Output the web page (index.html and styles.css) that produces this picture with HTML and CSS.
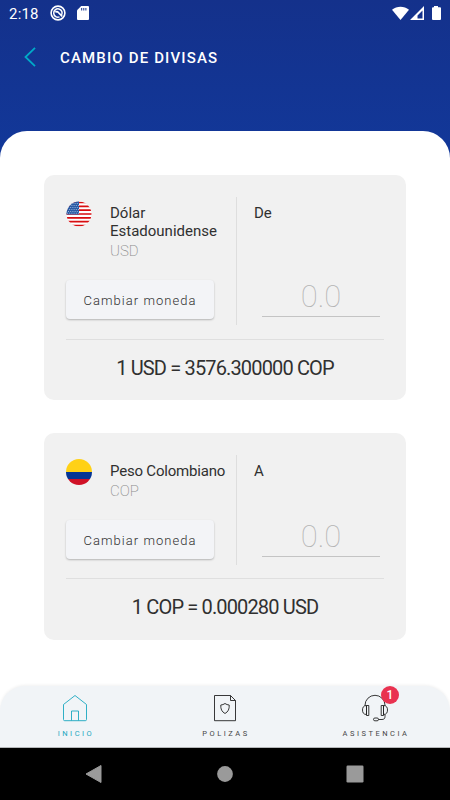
FILE: index.html
```html
<!DOCTYPE html>
<html lang="es">
    <head>
        <meta charset="UTF-8" />
        <meta name="viewport" content="width=device-width, initial-scale=1.0" />
        <title>Cambio de divisas</title>
        <link rel="stylesheet" href="styles.css">
    </head>
    <body>
        <header>
            <div class="status-bar">
                <span class="time">2:18</span>
                <svg class="icon-app" width="16" height="16" viewBox="0 0 16 16">
                    <circle cx="8" cy="8" r="6.9" fill="none" stroke="#fff" stroke-width="1.6" />
                    <path d="M11.5 10.2A4.2 4.2 0 1 0 9.5 11.9" fill="none" stroke="#fff" stroke-width="1.5" />
                    <path d="M5.4 7.2c1-.8 2.2-.6 3 .3l3.8 4" fill="none" stroke="#fff" stroke-width="1.8" />
                </svg>
                <svg class="icon-sd" width="12" height="14" viewBox="0 0 12 14">
                    <path d="M4.2 0H11a1 1 0 0 1 1 1v12a1 1 0 0 1-1 1H1a1 1 0 0 1-1-1V4.2z" fill="#fff" />
                    <path d="M4.7 2v2.5M6.8 2v2.5M8.9 2v2.5" stroke="#14328c" stroke-width="1" />
                </svg>
                <svg class="icon-signal" width="50" height="16" viewBox="0 0 50 16">
                    <path d="M0 3.8C4.8-.3 12.2-.3 17 3.8L8.5 14z" fill="#fff" />
                    <path d="M18 14L32 0v14zM25.5 12.5h5V4.5l-5 5z" fill="#fff" fill-rule="evenodd" />
                    <path d="M42 0h4v1.2h2a1 1 0 0 1 1 1V13a1 1 0 0 1-1 1h-7a1 1 0 0 1-1-1V2.2a1 1 0 0 1 1-1h1z" fill="#fff" />
                </svg>
            </div>
            <div class="title-bar">
                <svg width="12" height="20" viewBox="0 0 12 20">
                    <path d="M11 .8L1.5 10l9.5 9.2" fill="none" stroke="#00aac8" stroke-width="1.8" />
                </svg>
                <h1>CAMBIO DE DIVISAS</h1>
            </div>
        </header>
        <main>
            <section class="card">
                <div class="card-main">
                    <div class="currency">
                        <div class="currency-info">
                            <svg class="flag" width="26" height="26" viewBox="0 0 26 26">
                                <clipPath id="round-us"><circle cx="13" cy="13" r="12.5" /></clipPath>
                                <g clip-path="url(#round-us)">
                                    <rect width="26" height="26" fill="#fff" />
                                    <path d="M0 1.5h26M0 5.4h26M0 9.2h26M0 13h26M0 16.8h26M0 20.7h26M0 24.5h26" stroke="#d80d10" stroke-width="1.7" />
                                    <rect width="13" height="13.5" fill="#2a5ba5" />
                                    <path d="M2 2.5h11M1 4.5h12M2 6.5h11M1 8.5h12M2 10.5h11M1 12.2h12" stroke="#b9cbe6" stroke-width=".8" stroke-dasharray="1 1.2" />
                                </g>
                            </svg>
                            <div>
                                <p class="name">Dólar<br>Estadounidense</p>
                                <p class="code">USD</p>
                            </div>
                        </div>
                        <button type="button">Cambiar moneda</button>
                    </div>
                    <div class="amount">
                        <label for="from">De</label>
                        <input type="text" id="from" placeholder="0.0" />
                    </div>
                </div>
                <p class="rate">1 USD = 3576.300000 COP</p>
            </section>
            <section class="card card-to">
                <div class="card-main">
                    <div class="currency">
                        <div class="currency-info">
                            <svg class="flag" width="26" height="26" viewBox="0 0 26 26">
                                <clipPath id="round-co"><circle cx="13" cy="13" r="13" /></clipPath>
                                <g clip-path="url(#round-co)">
                                    <rect width="26" height="13" fill="#ffd116" />
                                    <rect y="13" width="26" height="7" fill="#053595" />
                                    <rect y="20" width="26" height="6" fill="#d01126" />
                                </g>
                            </svg>
                            <div>
                                <p class="name">Peso Colombiano</p>
                                <p class="code">COP</p>
                            </div>
                        </div>
                        <button type="button">Cambiar moneda</button>
                    </div>
                    <div class="amount">
                        <label for="to">A</label>
                        <input type="text" id="to" placeholder="0.0" />
                    </div>
                </div>
                <p class="rate">1 COP = 0.000280 USD</p>
            </section>
        </main>
        <nav class="tabs">
            <a class="tab active">
                <svg width="30" height="30" viewBox="0 0 30 30">
                    <path d="M3.5 10.5L15 1.5l11.5 9v15a1.2 1.2 0 0 1-1.2 1.2H4.7a1.2 1.2 0 0 1-1.2-1.2zM11.500 26.500v-9.500h7v9.500" />
                </svg>
                <span>INICIO</span>
            </a>
            <a class="tab">
                <svg width="30" height="30" viewBox="0 0 30 30">
                    <path d="M4.5 1.5h16l5 5v20.200h-21zM20.500 1.500v5h5M15 9.500c1.300 1 2.700 1.400 4.200 1.500.3 4-1 6.800-4.200 8.500-3.200-1.700-4.500-4.500-4.200-8.500 1.500-.1 2.900-.5 4.200-1.500z" />
                </svg>
                <span>POLIZAS</span>
            </a>
            <a class="tab">
                <svg width="30" height="30" viewBox="0 0 30 30">
                    <path d="M5 12v-.7a10 10 0 0 1 20 0v.7M6.5 11.5C3.5 11.5 2.5 13.5 2.5 16s1 4.500 4 4.500zM6.500 11.500h2.300v10H6.500zM23.500 11.500c3 0 4 2 4 4.500s-1 4.500-4 4.500zM21.200 11.500h2.300v10h-2.300zM25 20.500v2c0 2-1 3-3 3h-3.500" />
                    <rect x="13.5" y="24" width="5" height="2.8" rx="1.4" />
                </svg>
                <b class="badge">1</b>
                <span>ASISTENCIA</span>
            </a>
        </nav>
        <div class="system-nav">
            <svg width="18" height="20" viewBox="0 0 18 20"><path d="M1 10L16 1.5v17z" fill="#9a9a9a" stroke="#9a9a9a" stroke-linejoin="round" /></svg>
            <svg width="16" height="20" viewBox="0 0 16 20"><circle cx="8" cy="10" r="7.9" fill="#9a9a9a" /></svg>
            <svg width="18" height="20" viewBox="0 0 18 20"><rect x=".5" y="1.5" width="17" height="17" rx="1.2" fill="#9a9a9a" /></svg>
        </div>
    </body>
</html>
```

FILE: styles.css
```css
* {
    padding: 0;
    margin: 0;
    box-sizing: border-box;
}
body {
    width: 450px;
    height: 800px;
    overflow: hidden;
    display: flex;
    flex-direction: column;
    font-family: Roboto, 'Liberation Sans', sans-serif;
    background-color: #ffffff;
    color: #303030;
}
header {
    height: 161px;
    flex: none;
    background: linear-gradient(#14318b, #12389a);
    color: #ffffff;
}
.status-bar {
    display: flex;
    height: 28px;
    padding: 6px 8px 0 9px;
}
.time {
    width: 41px;
    font-size: 15px;
    line-height: 16px;
    letter-spacing: 0.2px;
}
.icon-app {
    margin-top: -1px;
}
.icon-sd {
    margin-left: 11px;
}
.icon-signal {
    margin-left: auto;
}
.title-bar {
    display: flex;
    align-items: center;
    gap: 23px;
    height: 58px;
    padding-left: 24px;
}
h1 {
    padding: 2px 0 0 1px;
    font-size: 15px;
    font-weight: 500;
    letter-spacing: 1.15px;
    line-height: 20px;
}
main {
    flex: 1;
    margin-top: -30px;
    padding: 44px 44px 0;
    background-color: #ffffff;
    border-radius: 27px 27px 0 0;
}
.card {
    height: 225px;
    padding: 22px;
    background-color: #f1f1f1;
    border-radius: 10px;
}
.card-to {
    height: 207px;
    margin-top: 33px;
}
.card-main {
    display: flex;
    height: 128px;
}
.card-to .card-main {
    height: 110px;
}
.currency {
    width: 170px;
}
.currency-info {
    display: flex;
    gap: 18px;
    padding-top: 4px;
}
.flag {
    flex: none;
}
.name {
    margin-top: 3px;
    font-size: 15px;
    line-height: 18px;
    white-space: nowrap;
}
.card-to .name {
    letter-spacing: -0.2px;
}
.code {
    font-size: 15px;
    font-weight: 200;
    line-height: 22px;
    color: #8c8c8c;
}
button {
    display: block;
    width: 148px;
    height: 39px;
    margin-top: 18px;
    padding-top: 2px;
    border: none;
    border-radius: 4px;
    background-color: #f3f4f7;
    box-shadow: 0 1px 2px rgba(0, 0, 0, 0.25);
    font-family: inherit;
    font-size: 13px;
    font-weight: 300;
    letter-spacing: 1.05px;
    color: #303030;
}
.amount {
    flex: 1;
    display: flex;
    flex-direction: column;
    justify-content: space-between;
    padding: 7px 4px 8px 17px;
    border-left: 1px solid #dedede;
}
.amount label {
    font-size: 15px;
    line-height: 18px;
}
.amount input {
    width: 118px;
    height: 44px;
    margin-left: 8px;
    padding-top: 4px;
    border: none;
    border-bottom: 1px solid #c4c4c4;
    background: none;
    font-family: inherit;
    font-size: 31px;
    font-weight: 100;
    text-align: center;
    outline: none;
}
.amount input::placeholder {
    color: #b4b4b4;
}
.rate {
    margin-top: 14px;
    padding-top: 15px;
    border-top: 1px solid #dfdfdf;
    font-size: 20px;
    line-height: 26px;
    letter-spacing: -0.85px;
    text-align: center;
    white-space: nowrap;
}
.card-to .rate {
    margin-top: 13px;
}
.tabs {
    flex: none;
    display: flex;
    justify-content: space-between;
    height: 62px;
    background-color: #f1f4f7;
    border-bottom: 1px solid #b5b7b9;
    border-radius: 25px 25px 0 0;
    box-shadow: 0 -1px 3px rgba(0, 0, 0, 0.06);
}
.tab {
    position: relative;
    display: flex;
    flex-direction: column;
    align-items: center;
    width: 150px;
    padding-top: 8px;
    font-size: 7.5px;
    line-height: 10px;
    color: #454545;
}
.tab span {
    padding-left: 2px;
    letter-spacing: 2.5px;
}
.tab svg {
    margin-bottom: 5px;
    fill: none;
    stroke: #222222;
    stroke-width: 0.9;
}
.active {
    color: #1aa7c0;
}
.active svg {
    stroke: #1aa7c0;
}
.badge {
    position: absolute;
    top: 0;
    left: 81px;
    width: 18px;
    height: 18px;
    border-radius: 50%;
    background-color: #e93250;
    color: #ffffff;
    font-size: 12px;
    font-weight: 500;
    line-height: 18px;
    text-align: center;
}
.system-nav {
    flex: none;
    display: flex;
    justify-content: space-between;
    height: 52px;
    padding: 16px 86px 0 85px;
    background-color: #000000;
}
```
